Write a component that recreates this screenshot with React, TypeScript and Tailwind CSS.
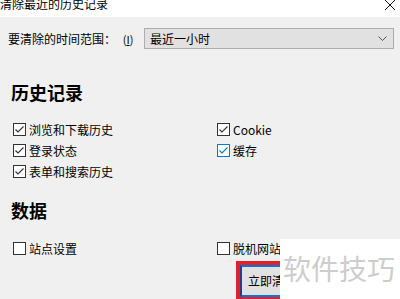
const font = { fontFamily: '"Noto Sans CJK SC", "Noto Sans", sans-serif' }

function CheckBox({ checked, blue }: { checked?: boolean; blue?: boolean }) {
  const color = blue ? '#0078d7' : '#333333'
  return (
    <span
      className="flex h-[13px] w-[13px] shrink-0 items-center justify-center border bg-white"
      style={{ borderColor: color }}
    >
      {checked && (
        <svg width="11" height="11" viewBox="0 0 11 11">
          <path d="M1.5 5.5 L4 8 L9.5 2.5" fill="none" stroke={color} strokeWidth="1.1" />
        </svg>
      )}
    </span>
  )
}

function Option({ label, checked, blue }: { label: string; checked?: boolean; blue?: boolean }) {
  return (
    <div className="flex h-[21px] items-center gap-[3px] whitespace-nowrap text-[12px] leading-[12px] text-black">
      <CheckBox checked={checked} blue={blue} />
      <span>{label}</span>
    </div>
  )
}

export default function App() {
  return (
    <div className="relative h-[299px] w-[400px] overflow-hidden bg-[#f0f0f0]" style={font}>
      {/* title bar */}
      <div className="flex h-[17px] items-start justify-between overflow-hidden bg-white">
        <span className="mt-[-2px] text-[12px] leading-[12px] text-black">清除最近的历史记录</span>
        <svg width="12" height="12" viewBox="0 0 12 12" className="mr-[4px] mt-[-1px]">
          <path d="M1 1 L11 11 M11 1 L1 11" stroke="#111" strokeWidth="1" />
        </svg>
      </div>

      {/* time range */}
      <div className="mt-[11px] flex items-center pl-[8px] pr-[6px]">
        <span className="text-[12px] leading-[12px] text-black">要清除的时间范围：</span>
        <span className="ml-[5px] mr-[9px] flex h-[12px] w-[14px] items-center justify-center text-[11px] leading-[12px] text-black">
          (<span className="underline">I</span>)
        </span>
        <div className="flex h-[21px] flex-1 items-center justify-between border border-[#adadad] bg-[#e1e1e1] pl-[5px] pr-[6px]">
          <span className="text-[12px] leading-[12px] text-black">最近一小时</span>
          <svg width="9" height="5" viewBox="0 0 9 5">
            <path d="M0.5 0.5 L4.5 4.5 L8.5 0.5" fill="none" stroke="#555" strokeWidth="1" />
          </svg>
        </div>
      </div>

      {/* history */}
      <div className="mt-[34px] pl-[11px] text-[18px] font-bold leading-[18px] text-black">历史记录</div>
      <div className="mt-[18px] grid grid-cols-[204px_1fr] pl-[13px]">
        <Option label="浏览和下载历史" checked />
        <Option label="Cookie" checked />
        <Option label="登录状态" checked />
        <Option label="缓存" checked blue />
        <Option label="表单和搜索历史" checked />
      </div>

      {/* data */}
      <div className="mt-[19px] pl-[11px] text-[18px] font-bold leading-[18px] text-black">数据</div>
      <div className="mt-[19px] grid grid-cols-[204px_63px] pl-[13px]">
        <Option label="站点设置" />
        <Option label="脱机网站" />
      </div>

      {/* clear button, outlined in red; cut by the watermark panel */}
      <div className="ml-[236px] mt-[2px] w-[44px] overflow-hidden">
        <div className="w-[120px] border-4 border-[#e0202c]">
          <div className="flex h-[32px] items-center border-2 border-[#0078d7] border-l-[#2b3a8c] bg-[#e1e1e1] pl-[6px]">
            <span className="whitespace-nowrap text-[12px] leading-[12px] text-black">立即清</span>
          </div>
        </div>
      </div>

      {/* watermark */}
      <div className="absolute bottom-0 left-[280px] right-0 top-[239px] bg-white pl-[3px] pt-[15px]">
        <span className="whitespace-nowrap text-[28px] leading-[28px] text-[#cdcdcd]">软件技巧</span>
      </div>
    </div>
  )
}
